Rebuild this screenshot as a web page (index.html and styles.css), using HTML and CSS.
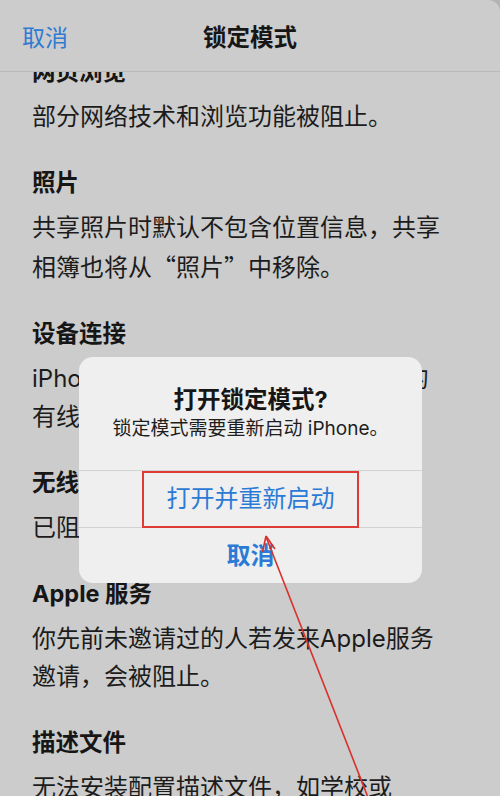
FILE: index.html
```html
<!DOCTYPE html>
<html lang="zh-CN">
<head>
<meta charset="utf-8">
<title>锁定模式</title>
<link rel="stylesheet" href="styles.css">
</head>
<body>
<div class="sheet">
  <header class="navbar">
    <span class="nav-cancel">取消</span>
    <span class="nav-title">锁定模式</span>
    <span class="nav-spacer"></span>
  </header>
  <main class="content">
    <section class="item first">
      <h2>网页浏览</h2>
      <p>部分网络技术和浏览功能被阻止。</p>
    </section>
    <section class="item">
      <h2>照片</h2>
      <p>共享照片时默认不包含位置信息，共享<br>相簿也将从<span class="cjk">“照片”</span>中移除。</p>
    </section>
    <section class="item">
      <h2>设备连接</h2>
      <p>iPhone 锁定时，与电脑或配件之间的<br>有线连接会被阻止。</p>
    </section>
    <section class="item">
      <h2>无线连接</h2>
      <p>已阻止自动加入不安全的无线网络。</p>
    </section>
    <section class="item">
      <h2>Apple 服务</h2>
      <p>你先前未邀请过的人若发来Apple服务<br>邀请，会被阻止。</p>
    </section>
    <section class="item">
      <h2>描述文件</h2>
      <p>无法安装配置描述文件，如学校或<br>工作单位的描述文件。</p>
    </section>
  </main>

  <div class="alert">
    <div class="alert-body">
      <div class="alert-title">打开锁定模式?</div>
      <div class="alert-msg">锁定模式需要重新启动 iPhone。</div>
    </div>
    <div class="alert-btn primary">打开并重新启动</div>
    <div class="alert-btn cancel">取消</div>
  </div>

  <div class="highlight"></div>

  <svg class="arrow" width="500" height="796" viewBox="0 0 500 796">
    <line x1="266.5" y1="538" x2="369" y2="800" stroke="#d9302c" stroke-width="1.6"/>
    <path d="M266 536 L262.5 552 M266 536 L275 549" stroke="#d9302c" stroke-width="1.6" fill="none"/>
  </svg>
</div>
</body>
</html>
```
FILE: styles.css
```css
html, body {
  margin: 0;
  padding: 0;
}
body {
  background: #b4b4b4;
  font-family: "Inter", "Noto Sans CJK SC", sans-serif;
  color: #1b1b1b;
}
.sheet {
  position: relative;
  width: 500px;
  height: 796px;
  background: #cccccc;
  border-top-right-radius: 12px;
  overflow: hidden;
  display: flex;
  flex-direction: column;
}
.navbar {
  flex: none;
  height: 71px;
  border-bottom: 1px solid #bababa;
  display: grid;
  grid-template-columns: 1fr auto 1fr;
  align-items: center;
  padding: 0 22px;
}
.nav-cancel {
  font-size: 23px;
  color: #2f7bd1;
  font-family: "Noto Sans CJK SC", sans-serif;
}
.nav-title {
  font-size: 23.5px;
  font-weight: 700;
  color: #161616;
  font-family: "Noto Sans CJK SC", sans-serif;
}
.content {
  flex: 1;
  overflow: hidden;
  padding: 0 32px;
}
.item {
  margin-bottom: 27px;
}
.item.first {
  margin-top: -20px;
}
.item h2 {
  margin: 0 0 6px;
  font-size: 23.5px;
  line-height: 40px;
  font-weight: 700;
  color: #161616;
}
.item p {
  margin: 0;
  font-size: 24px;
  line-height: 38px;
  color: #1c1c1c;
}
.cjk {
  font-family: "Noto Sans CJK SC", sans-serif;
}
.alert {
  position: absolute;
  left: 79px;
  top: 357px;
  width: 343px;
  background: #efefef;
  border-radius: 14px;
  overflow: hidden;
  text-align: center;
}
.alert-body {
  padding: 28px 16px 27px;
  border-bottom: 1px solid #d2d2d2;
}
.alert-title {
  font-size: 23.5px;
  line-height: 30px;
  font-weight: 700;
  color: #161616;
}
.alert-msg {
  font-size: 19px;
  line-height: 28px;
  color: #1e1e1e;
}
.alert-btn {
  height: 56px;
  line-height: 56px;
  font-size: 24px;
  color: #2b7bd6;
}
.alert-btn.primary {
  border-bottom: 1px solid #d2d2d2;
}
.alert-btn.cancel {
  font-weight: 700;
  height: 55px;
  line-height: 55px;
}
.highlight {
  position: absolute;
  left: 142px;
  top: 471px;
  width: 213px;
  height: 53px;
  border: 2px solid #df3a36;
  pointer-events: none;
}
.arrow {
  position: absolute;
  left: 0;
  top: 0;
  pointer-events: none;
}
```
